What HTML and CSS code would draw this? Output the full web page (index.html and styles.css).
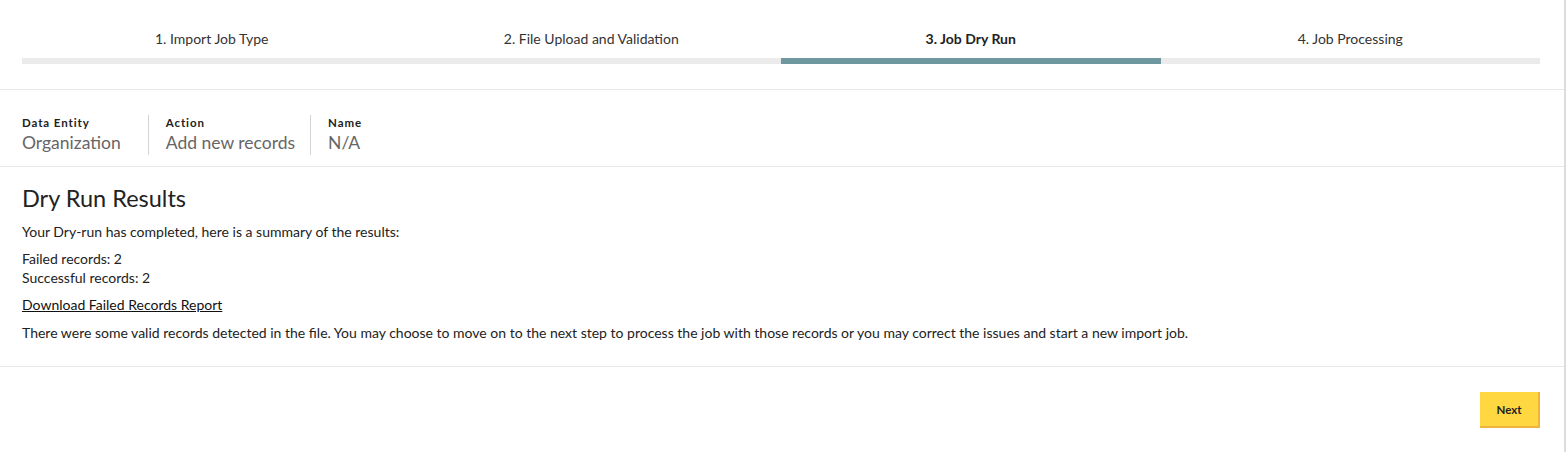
FILE: index.html
```html
<!DOCTYPE html>
<html lang="en">
<head>
    <meta charset="UTF-8">
    <meta name="viewport" content="width=device-width, initial-scale=1.0">
    <title>Import Job - Dry Run</title>
    <link rel="stylesheet" href="styles.css">
</head>
<body>
    <div class="page">
        <div class="stepper">
            <div class="step">
                <span class="step-label">1. Import Job Type</span>
                <div class="step-bar"></div>
            </div>
            <div class="step">
                <span class="step-label">2. File Upload and Validation</span>
                <div class="step-bar"></div>
            </div>
            <div class="step active">
                <span class="step-label">3. Job Dry Run</span>
                <div class="step-bar"></div>
            </div>
            <div class="step">
                <span class="step-label">4. Job Processing</span>
                <div class="step-bar"></div>
            </div>
        </div>

        <div class="summary">
            <div class="summary-item">
                <div class="summary-label">Data Entity</div>
                <div class="summary-value">Organization</div>
            </div>
            <div class="summary-item">
                <div class="summary-label">Action</div>
                <div class="summary-value">Add new records</div>
            </div>
            <div class="summary-item">
                <div class="summary-label">Name</div>
                <div class="summary-value">N/A</div>
            </div>
        </div>

        <div class="results">
            <h2>Dry Run Results</h2>
            <p>Your Dry-run has completed, here is a summary of the results:</p>
            <p class="counts">Failed records: 2<br>Successful records: 2</p>
            <p><a href="#" class="report-link">Download Failed Records Report</a></p>
            <p class="note">There were some valid records detected in the file. You may choose to move on to the next step to process the job with those records or you may correct the issues and start a new import job.</p>
        </div>

        <div class="footer">
            <button type="button" class="btn-next">Next</button>
        </div>
    </div>
</body>
</html>
```

FILE: styles.css
```css
body {
    margin: 0;
    font-family: Lato, "Liberation Sans", Arial, sans-serif;
    color: #222;
    background-color: #fff;
}
.page {
    width: 1564px;
    min-height: 452px;
    border-right: 2px solid #dcdcdc;
}
.stepper {
    display: flex;
    padding: 30px 24px 25px 22px;
    border-bottom: 1px solid #e8e8e8;
}
.step {
    flex: 1;
    display: flex;
    flex-direction: column;
    align-items: center;
}
.step-label {
    font-size: 14px;
    line-height: 17px;
    color: #333;
    margin-bottom: 11px;
}
.step.active .step-label {
    font-weight: bold;
    color: #222;
}
.step-bar {
    width: 100%;
    height: 6px;
    background-color: #ebebeb;
}
.step.active .step-bar {
    background-color: #6f979f;
}
.summary {
    display: flex;
    padding: 25px 22px 11px;
    border-bottom: 1px solid #e8e8e8;
}
.summary-item {
    padding: 0 15px 0 17px;
    border-left: 1px solid #d4d4d4;
}
.summary-item:first-child {
    padding-left: 0;
    padding-right: 27px;
    border-left: none;
}
.summary-label {
    font-size: 11.5px;
    font-weight: bold;
    letter-spacing: 0.9px;
    line-height: 16px;
    color: #222;
}
.summary-value {
    font-size: 17.5px;
    line-height: 24px;
    color: #666;
}
.results {
    padding: 17px 22px 24px;
    border-bottom: 1px solid #e8e8e8;
}
.results h2 {
    margin: 0 0 10px;
    font-size: 23.5px;
    font-weight: normal;
    line-height: 28px;
    color: #222;
}
.results p {
    margin: 0 0 8px;
    font-size: 14px;
    line-height: 19px;
    color: #222;
}
.results p.note {
    margin: 9px 0 0;
}
.report-link {
    color: #111;
    text-decoration: underline;
}
.footer {
    display: flex;
    justify-content: flex-end;
    padding: 25px 24px 20px;
}
.btn-next {
    width: 60px;
    height: 36px;
    padding: 0;
    font-family: inherit;
    font-size: 11.5px;
    font-weight: bold;
    color: #222;
    background-color: #ffd740;
    border: none;
    border-right: 2px solid #f0b43c;
    border-bottom: 2px solid #f0b43c;
    cursor: pointer;
}
```
